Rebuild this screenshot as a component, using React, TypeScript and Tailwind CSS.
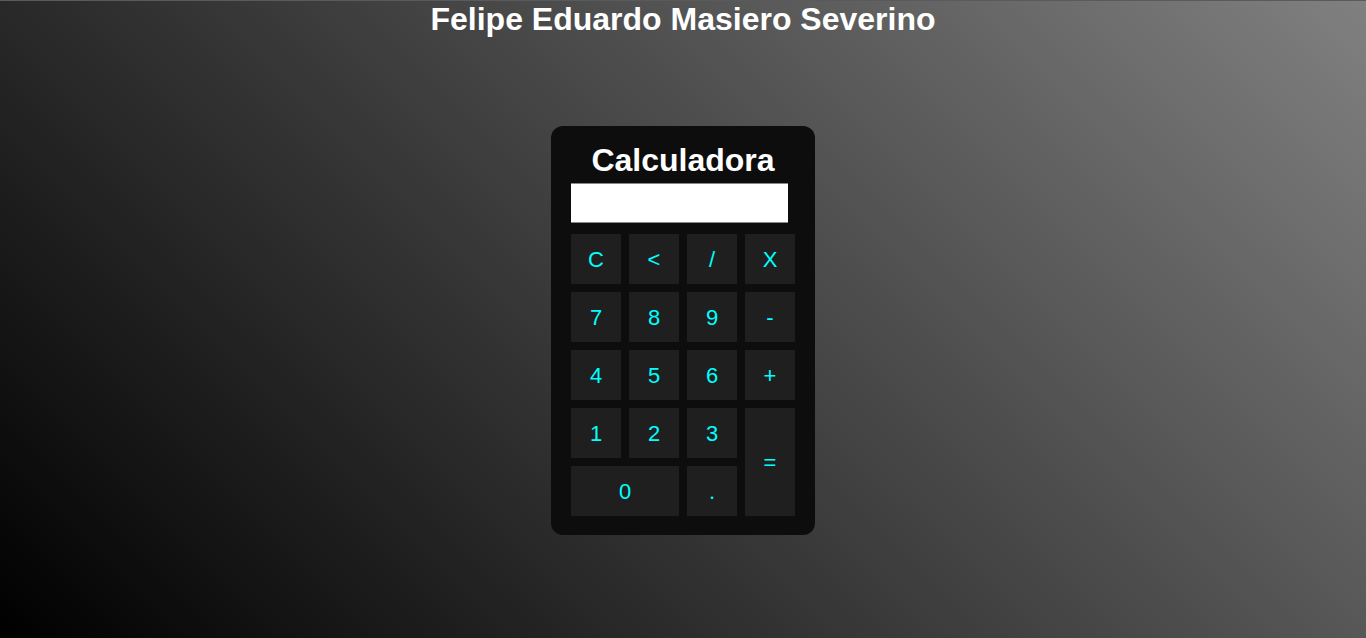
import React from "react";

const keys: { label: string; cls: string }[] = [
  { label: "C", cls: "" },
  { label: "<", cls: "" },
  { label: "/", cls: "" },
  { label: "X", cls: "" },
  { label: "7", cls: "" },
  { label: "8", cls: "" },
  { label: "9", cls: "" },
  { label: "-", cls: "" },
  { label: "4", cls: "" },
  { label: "5", cls: "" },
  { label: "6", cls: "" },
  { label: "+", cls: "" },
  { label: "1", cls: "" },
  { label: "2", cls: "" },
  { label: "3", cls: "" },
  { label: "=", cls: "row-span-2" },
  { label: "0", cls: "col-span-2" },
  { label: ".", cls: "" },
];

export default function App() {
  return (
    <div
      className="w-[1366px] h-[638px] overflow-hidden border-t border-[#5a5a5a] bg-[linear-gradient(45deg,#000000,#808080)] flex flex-col items-center"
      style={{ fontFamily: '"Liberation Sans", Arial, sans-serif' }}
    >
      <h1 className="text-[32px] leading-[37px] font-bold text-white mt-0">
        Felipe Eduardo Masiero Severino
      </h1>
      <div className="mt-[88px] w-[264px] rounded-[12px] bg-[#0d0d0d] px-5 pb-[19px] pt-[16px] flex flex-col">
        <h2 className="text-[32px] leading-[37px] font-bold text-white text-center">
          Calculadora
        </h2>
        <div className="mt-[4px] h-[40px] w-[217px] bg-white border-y border-[#888]" />
        <div className="mt-[11px] grid grid-cols-[50px_50px_50px_50px] auto-rows-[50px] gap-[8px]">
          {keys.map((k) => (
            <button
              key={k.label}
              className={`${k.cls} bg-[#1f1f1f] text-[#00ffff] text-[22px] flex items-center justify-center`}
            >
              {k.label}
            </button>
          ))}
        </div>
      </div>
    </div>
  );
}
